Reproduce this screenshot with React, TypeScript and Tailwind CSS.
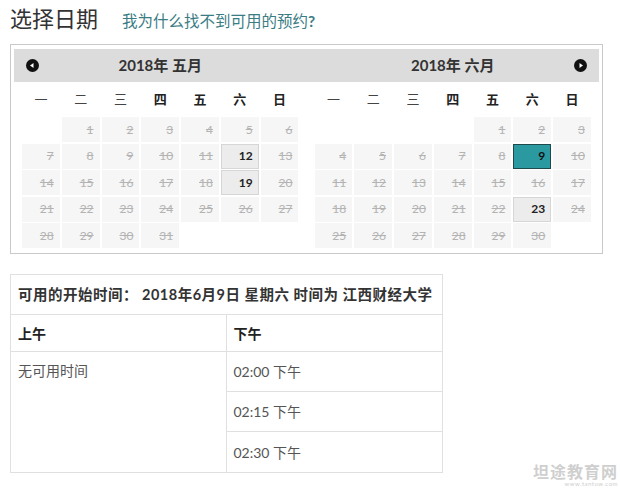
import React from "react";

type Cell = { d: number | null; kind?: "off" | "open" | "selected" };

const FONT = { fontFamily: "Lato, 'Noto Sans CJK SC', sans-serif" };

function buildMonth(startCol: number, days: number, open: number[], selected?: number): Cell[] {
  const cells: Cell[] = [];
  for (let i = 0; i < startCol; i++) cells.push({ d: null });
  for (let d = 1; d <= days; d++) {
    cells.push({ d, kind: d === selected ? "selected" : open.includes(d) ? "open" : "off" });
  }
  while (cells.length % 7 !== 0) cells.push({ d: null });
  return cells;
}

const months = [
  { title: "2018年 五月", cells: buildMonth(1, 31, [12, 19]), nav: "prev" },
  { title: "2018年 六月", cells: buildMonth(4, 30, [23], 9), nav: "next" },
];

const weekdays = ["一", "二", "三", "四", "五", "六", "日"];

function NavDot({ dir }: { dir: "prev" | "next" }) {
  return (
    <svg width="13" height="13" viewBox="0 0 13 13">
      <circle cx="6.5" cy="6.5" r="6.5" fill="#111" />
      {dir === "prev" ? (
        <path d="M4 6.5 L7.5 4 L7.5 9 Z" fill="#fff" />
      ) : (
        <path d="M9 6.5 L5.5 4 L5.5 9 Z" fill="#fff" />
      )}
    </svg>
  );
}

function DayCell({ cell }: { cell: Cell }) {
  if (cell.d === null) return <div className="h-[25px]" />;
  if (cell.kind === "selected")
    return (
      <div className="flex h-[25px] items-center justify-end border border-[#1f4a4d] bg-[#2b9aa0] pr-[5px] text-[12px] font-bold text-[#111]">
        {cell.d}
      </div>
    );
  if (cell.kind === "open")
    return (
      <div className="flex h-[25px] items-center justify-end border border-[#d6d6d6] bg-[#ececec] pr-[5px] text-[12px] font-bold text-[#222]">
        {cell.d}
      </div>
    );
  return (
    <div className="flex h-[25px] items-center justify-end bg-[#f6f6f6] pr-[6px] text-[12px] text-[#b3b3b3] line-through">
      {cell.d}
    </div>
  );
}

export default function App() {
  return (
    <div className="relative h-[488px] w-[620px] bg-white px-[10px] pt-[2px] text-[#333]" style={FONT}>
      <div className="flex items-baseline">
        <h1 className="text-[22px] font-normal text-[#333]">选择日期</h1>
        <a className="ml-[24px] text-[15.5px] text-[#3a7c84]">
          我为什么找不到可用的预约<span className="font-bold">?</span>
        </a>
      </div>

      <div className="mt-[9px] w-[593px] border border-[#c9c9c9] px-[3px] pb-[5px] pt-[4px]">
        <div className="flex">
          {months.map((m) => (
            <div key={m.title} className="flex-1">
              <div
                className={`relative flex h-[33px] items-center bg-[#dcdcdc] px-[12px] ${
                  m.nav === "prev" ? "justify-start" : "justify-end"
                }`}
              >
                <NavDot dir={m.nav as "prev" | "next"} />
                <span className="absolute left-0 right-0 text-center text-[15px] font-bold text-[#333]">
                  {m.title}
                </span>
              </div>
              <div className="grid grid-cols-7 gap-x-[2px] px-[8px]">
                {weekdays.map((w, i) => (
                  <div
                    key={w}
                    className={`flex h-[35px] items-center justify-center text-[13px] ${
                      i < 3 ? "font-normal text-[#444]" : "font-bold text-[#222]"
                    }`}
                  >
                    {w}
                  </div>
                ))}
              </div>
              <div className="grid grid-cols-7 gap-x-[2px] gap-y-[1.5px] px-[8px]">
                {m.cells.map((c, i) => (
                  <DayCell key={i} cell={c} />
                ))}
              </div>
            </div>
          ))}
        </div>
      </div>

      <div className="mt-[20px] w-[433px] border border-[#e0e0e0] text-[14px]">
        <div className="flex h-[40px] items-center border-b border-[#e0e0e0] px-[7px] text-[14.5px] font-bold tracking-[0.5px] text-[#333]">
          可用的开始时间：&nbsp;2018年6月9日 星期六 时间为 江西财经大学
        </div>
        <div className="grid grid-cols-2">
          <div className="flex h-[37px] items-center border-b border-r border-[#e0e0e0] px-[7px] font-bold text-[#222]">
            上午
          </div>
          <div className="flex h-[37px] items-center border-b border-[#e0e0e0] px-[7px] font-bold text-[#222]">
            下午
          </div>
          <div className="border-r border-[#e0e0e0] px-[7px] pt-[8px] text-[#555]">无可用时间</div>
          <div className="flex flex-col text-[#555]">
            <div className="flex h-[40px] items-center border-b border-[#e0e0e0] px-[7px]">02:00 下午</div>
            <div className="flex h-[40px] items-center border-b border-[#e0e0e0] px-[7px]">02:15 下午</div>
            <div className="flex h-[40px] items-center px-[7px]">02:30 下午</div>
          </div>
        </div>
      </div>

      <div className="absolute bottom-[1px] right-[2px] flex flex-col items-end gap-[1px] text-[#cfcfcf]">
        <span className="text-[16px] font-bold leading-[16px] tracking-[1px]">坦途教育网</span>
        <span className="text-[6px] leading-[6px] tracking-[0.5px]">www.tantuw.com</span>
      </div>
    </div>
  );
}
